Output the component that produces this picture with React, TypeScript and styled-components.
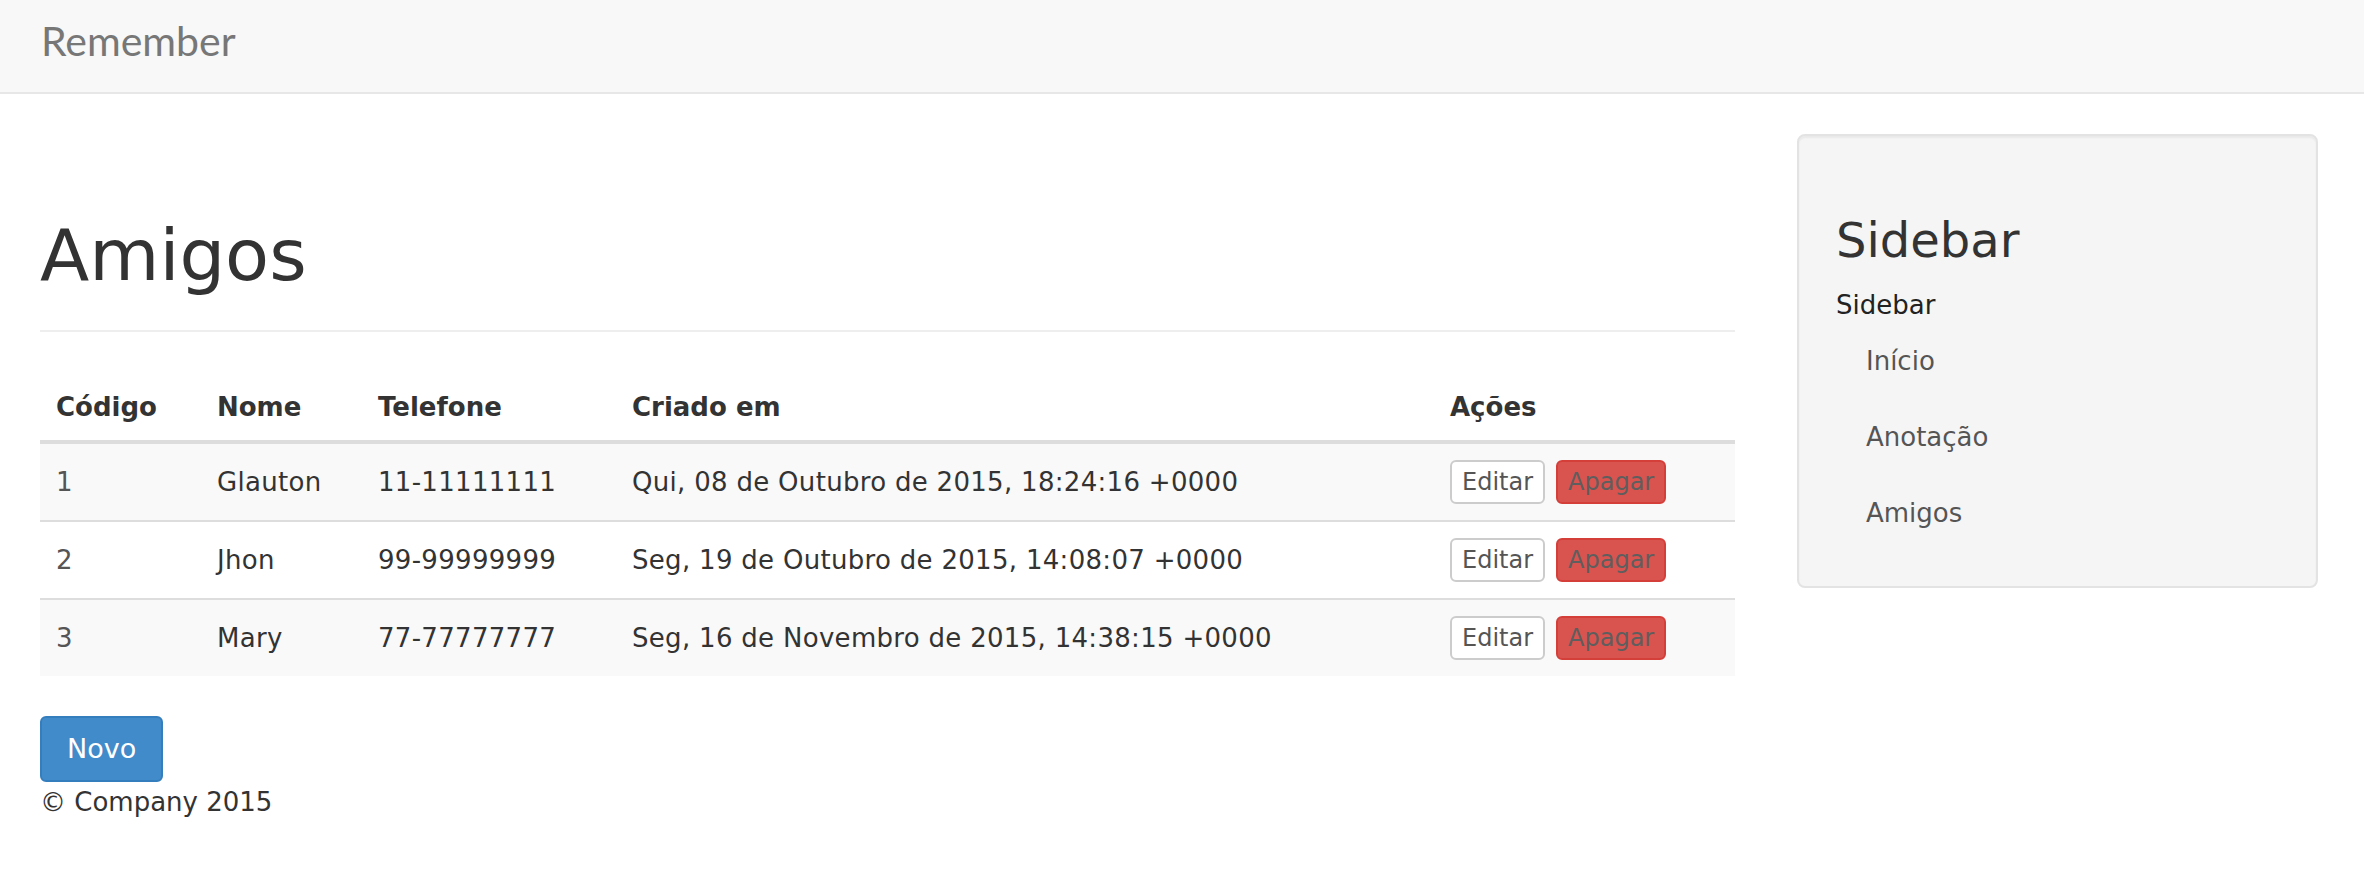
import React from "react";
import styled, { createGlobalStyle } from "styled-components";

const GlobalStyle = createGlobalStyle`
  html, body {
    margin: 0;
    padding: 0;
    background: #ffffff;
  }
  body {
    font-family: "DejaVu Sans", Verdana, sans-serif;
    font-size: 26px;
    line-height: 40px;
    color: #333333;
  }
  * { box-sizing: border-box; }
`;

const Navbar = styled.header`
  height: 94px;
  background: #f8f8f8;
  border-bottom: 2px solid #e7e7e7;
  display: flex;
  align-items: flex-start;
`;

const Brand = styled.a`
  font-family: Lato, "Open Sans", sans-serif;
  font-size: 41px;
  line-height: 48px;
  color: #777777;
  padding: 17px 0 0 41px;
  text-decoration: none;
`;

const Container = styled.div`
  display: flex;
  align-items: flex-start;
  gap: 62px;
  padding: 40px 46px 0 40px;
`;

const Main = styled.main`
  width: 1695px;
  flex: none;
`;

const PageHeader = styled.div`
  padding-bottom: 35px;
  border-bottom: 2px solid #eeeeee;
  margin-bottom: 36px;
`;

const Title = styled.h1`
  margin: 82px 0 0;
  font-size: 72px;
  line-height: 79px;
  font-weight: normal;
  color: #333333;
`;

const Table = styled.table`
  width: 100%;
  table-layout: fixed;
  border-collapse: separate;
  border-spacing: 0;
  margin-bottom: 40px;
`;

const HeadCell = styled.th`
  text-align: left;
  font-weight: bold;
  color: #333333;
  padding: 19px 16px 13px;
  line-height: 40px;
  border-bottom: 4px solid #dddddd;
`;

const Row = styled.tr<{ $striped: boolean }>`
  background: ${(p) => (p.$striped ? "#f9f9f9" : "#ffffff")};
`;

const Cell = styled.td<{ $first: boolean; $muted?: boolean }>`
  padding: 16px;
  line-height: 40px;
  vertical-align: middle;
  white-space: nowrap;
  letter-spacing: 0.3px;
  color: ${(p) => (p.$muted ? "#555555" : "#333333")};
  border-top: ${(p) => (p.$first ? "none" : "2px solid #dddddd")};
`;

const Actions = styled.div`
  display: inline-flex;
  gap: 11px;
  vertical-align: middle;
`;

const SmallButton = styled.button<{ $danger?: boolean }>`
  font-family: "DejaVu Sans", Verdana, sans-serif;
  font-size: 24px;
  line-height: 40px;
  height: 44px;
  padding: 0 10px;
  border-radius: 6px;
  border: 2px solid ${(p) => (p.$danger ? "#d43f3a" : "#cccccc")};
  background: ${(p) => (p.$danger ? "#d9534f" : "#ffffff")};
  color: ${(p) => (p.$danger ? "#5e5e5e" : "#555555")};
  cursor: pointer;
`;

const PrimaryButton = styled.button`
  display: block;
  font-family: "DejaVu Sans", Verdana, sans-serif;
  font-size: 27px;
  line-height: 40px;
  padding: 11px 25px;
  border-radius: 6px;
  border: 2px solid #357ebd;
  background: #428bca;
  color: #ffffff;
  cursor: pointer;
`;

const Footer = styled.footer`
  line-height: 40px;
  color: #333333;
`;

const Well = styled.aside`
  width: 521px;
  flex: none;
  background: #f5f5f5;
  border: 2px solid #e3e3e3;
  border-radius: 8px;
  box-shadow: inset 0 2px 2px rgba(0, 0, 0, 0.05);
  padding: 38px 37px 35px;
`;

const WellTitle = styled.h3`
  margin: 40px 0 20px;
  font-size: 48px;
  line-height: 53px;
  font-weight: normal;
  color: #333333;
`;

const WellText = styled.p`
  margin: 0;
  line-height: 36px;
  color: #222222;
`;

const NavList = styled.ul`
  list-style: none;
  margin: 0;
  padding: 0;
`;

const NavLink = styled.a`
  display: block;
  padding: 18px 30px;
  line-height: 40px;
  color: #555555;
  text-decoration: none;
`;

const columns = [
  { label: "Código", width: 161 },
  { label: "Nome", width: 161 },
  { label: "Telefone", width: 254 },
  { label: "Criado em", width: 818 },
  { label: "Ações", width: 301 },
];

const friends = [
  { id: 1, name: "Glauton", phone: "11-11111111", created: "Qui, 08 de Outubro de 2015, 18:24:16 +0000" },
  { id: 2, name: "Jhon", phone: "99-99999999", created: "Seg, 19 de Outubro de 2015, 14:08:07 +0000" },
  { id: 3, name: "Mary", phone: "77-77777777", created: "Seg, 16 de Novembro de 2015, 14:38:15 +0000" },
];

const links = ["Início", "Anotação", "Amigos"];

export default function App() {
  return (
    <>
      <GlobalStyle />
      <Navbar>
        <Brand href="#">Remember</Brand>
      </Navbar>
      <Container>
        <Main>
          <PageHeader>
            <Title>Amigos</Title>
          </PageHeader>
          <Table>
            <colgroup>
              {columns.map((c) => (
                <col key={c.label} style={{ width: c.width }} />
              ))}
            </colgroup>
            <thead>
              <tr>
                {columns.map((c) => (
                  <HeadCell key={c.label}>{c.label}</HeadCell>
                ))}
              </tr>
            </thead>
            <tbody>
              {friends.map((f, i) => (
                <Row key={f.id} $striped={i % 2 === 0}>
                  <Cell $first={i === 0} $muted>{f.id}</Cell>
                  <Cell $first={i === 0}>{f.name}</Cell>
                  <Cell $first={i === 0}>{f.phone}</Cell>
                  <Cell $first={i === 0}>{f.created}</Cell>
                  <Cell $first={i === 0}>
                    <Actions>
                      <SmallButton>Editar</SmallButton>
                      <SmallButton $danger>Apagar</SmallButton>
                    </Actions>
                  </Cell>
                </Row>
              ))}
            </tbody>
          </Table>
          <PrimaryButton>Novo</PrimaryButton>
          <Footer>© Company 2015</Footer>
        </Main>
        <Well>
          <WellTitle>Sidebar</WellTitle>
          <WellText>Sidebar</WellText>
          <NavList>
            {links.map((l) => (
              <li key={l}>
                <NavLink href="#">{l}</NavLink>
              </li>
            ))}
          </NavList>
        </Well>
      </Container>
    </>
  );
}
